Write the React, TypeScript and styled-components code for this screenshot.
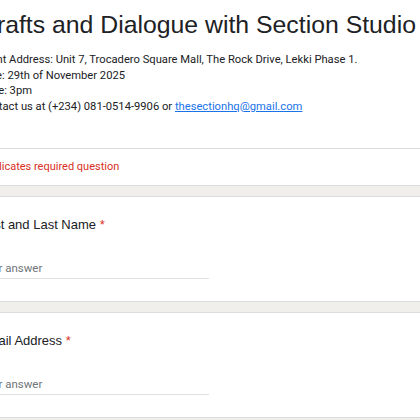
import styled, { createGlobalStyle } from "styled-components";

const GlobalStyle = createGlobalStyle`
    html, body {
        margin: 0;
        padding: 0;
        background: #f1efeb;
        overflow: hidden;
    }
`;

export default function App() {
    return (
        <>
            <GlobalStyle />
            <Page>
                <HeaderCard>
                    <HeaderTop>
                        <FormTitle>Crafts and Dialogue with Section Studio</FormTitle>
                        <Description>
                            <p>Event Address: Unit 7, Trocadero Square Mall, The Rock Drive, Lekki Phase 1.</p>
                            <p>Date: 29th of November 2025</p>
                            <p>Time: 3pm</p>
                            <p>
                                Contact us at (+234) 081-0514-9906 or{" "}
                                <MailLink href="mailto:thesectionhq@gmail.com">thesectionhq@gmail.com</MailLink>
                            </p>
                        </Description>
                    </HeaderTop>
                    <RequiredNote>* Indicates required question</RequiredNote>
                </HeaderCard>

                <QuestionCard>
                    <QuestionTitle>
                        First and Last Name <Star>*</Star>
                    </QuestionTitle>
                    <AnswerInput type="text" placeholder="Your answer" />
                </QuestionCard>

                <QuestionCard>
                    <QuestionTitle>
                        Email Address <Star>*</Star>
                    </QuestionTitle>
                    <AnswerInput type="email" placeholder="Your answer" />
                </QuestionCard>
            </Page>
        </>
    );
}

const Page = styled.div`
    width: 544px;
    margin-left: -42px;
    display: flex;
    flex-direction: column;
    gap: 10px;
`;

const Card = styled.div`
    background: #fff;
    border: 1px solid #dadce0;
    border-radius: 8px;
`;

const HeaderCard = styled(Card)`
    border-top: none;
    border-radius: 0 0 8px 8px;
`;

const HeaderTop = styled.div`
    padding: 10px 20px 34px;
    border-bottom: 1px solid #dadce0;
`;

const FormTitle = styled.h1`
    margin: 0;
    font-family: "Liberation Sans", Arial, sans-serif;
    font-weight: 400;
    font-size: 24.8px;
    line-height: 30px;
    color: #202124;
    white-space: nowrap;
`;

const Description = styled.div`
    margin-top: 12px;
    font-family: Roboto, "Noto Sans", sans-serif;
    font-size: 11.2px;
    line-height: 15.5px;
    color: #202124;

    p {
        margin: 0;
        white-space: nowrap;
    }
`;

const MailLink = styled.a`
    color: #1a73e8;
    text-decoration: underline;
`;

const RequiredNote = styled.div`
    padding: 10px 20px 10px;
    font-family: Roboto, "Noto Sans", sans-serif;
    font-size: 11px;
    line-height: 16px;
    color: #d93025;
`;

const QuestionCard = styled(Card)`
    padding: 19px 20px 22px;
    display: flex;
    flex-direction: column;
    gap: 27px;
`;

const QuestionTitle = styled.div`
    font-family: "Liberation Sans", Arial, sans-serif;
    font-size: 13px;
    line-height: 17px;
    color: #202124;
`;

const Star = styled.span`
    color: #d93025;
`;

const AnswerInput = styled.input`
    width: 230px;
    box-sizing: border-box;
    border: none;
    border-bottom: 1px solid #e0e0e0;
    padding: 0 0 2px;
    margin: 0;
    font-family: Roboto, "Noto Sans", sans-serif;
    font-size: 11.5px;
    line-height: 16px;
    height: 19px;
    color: #202124;
    background: transparent;
    outline: none;

    &::placeholder {
        color: #70757a;
    }
`;
